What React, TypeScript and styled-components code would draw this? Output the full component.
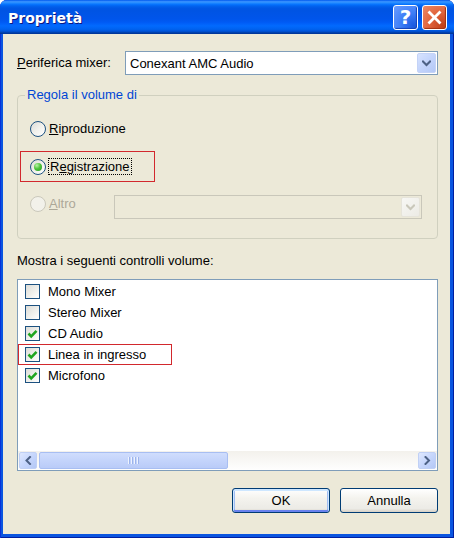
import React from "react";
import styled, { createGlobalStyle, css } from "styled-components";

const GlobalStyle = createGlobalStyle`
  html, body {
    margin: 0;
    padding: 0;
    background: #ffffff;
  }
  body {
    font-family: "Liberation Sans", Arial, sans-serif;
    font-size: 13px;
    color: #000000;
  }
`;

const Window = styled.div`
  width: 454px;
  height: 538px;
  display: flex;
  flex-direction: column;
  background: #0a55e0;
  box-shadow: inset 1px 0 0 #0831d9, inset -1px 0 0 #001ea0, inset 0 -1px 0 #001ea0;
  border-radius: 7px 7px 0 0;
  overflow: hidden;
`;

const TitleBar = styled.div`
  height: 34px;
  flex: none;
  display: flex;
  align-items: center;
  padding: 0 7px 0 8px;
  background: linear-gradient(
    to bottom,
    #0058ee 0%,
    #3a93ff 5%,
    #288eff 8%,
    #127dff 11%,
    #036ffc 14%,
    #0262ee 18%,
    #0057e5 24%,
    #0054e3 30%,
    #0055eb 56%,
    #005bf5 66%,
    #026afe 76%,
    #0062ef 86%,
    #0052d6 92%,
    #0040ab 96%,
    #003092 100%
  );
`;

const Title = styled.div`
  flex: 1;
  color: #ffffff;
  font-family: "DejaVu Sans", "Liberation Sans", sans-serif;
  font-weight: bold;
  font-size: 14px;
  padding-top: 1px;
  text-shadow: 1px 1px 0 #0a1883;
`;

const CaptionButton = styled.div<{ $kind: "help" | "close" }>`
  width: 25px;
  height: 25px;
  box-sizing: border-box;
  border: 1px solid #ffffff;
  border-radius: 3px;
  display: flex;
  align-items: center;
  justify-content: center;
  color: #ffffff;
  font-family: "DejaVu Sans", sans-serif;
  font-weight: bold;
  font-size: 20px;
  ${(p) =>
    p.$kind === "help"
      ? css`
          background: radial-gradient(circle at 85% 85%, #1c5adf 0%, #3d7ef7 45%, #6b9cff 100%);
          box-shadow: inset -1px -1px 1px #1542b5;
        `
      : css`
          margin-left: 4px;
          background: radial-gradient(circle at 85% 85%, #c1411a 0%, #e2643c 50%, #eb8a68 100%);
          box-shadow: inset -1px -1px 1px #a2300f;
        `}
`;

const Client = styled.div`
  flex: 1;
  margin: 0 4px 4px 3px;
  background: #ece9d8;
  padding: 17px 12px 0 14px;
  display: flex;
  flex-direction: column;
`;

const MixerRow = styled.div`
  display: flex;
  align-items: center;
  height: 24px;
`;

const FieldLabel = styled.span<{ $width?: number; $disabled?: boolean }>`
  flex: none;
  width: ${(p) => (p.$width ? `${p.$width}px` : "auto")};
  color: ${(p) => (p.$disabled ? "#aca899" : "#000000")};
  line-height: 16px;
`;

const Combo = styled.div<{ $disabled?: boolean }>`
  flex: 1;
  height: 24px;
  box-sizing: border-box;
  display: flex;
  align-items: center;
  border: 1px solid ${(p) => (p.$disabled ? "#c9c7ba" : "#7f9db9")};
  background: ${(p) => (p.$disabled ? "#ece9d8" : "#ffffff")};
  padding: 1px;
`;

const ComboText = styled.span`
  flex: 1;
  padding-left: 3px;
`;

const DropButton = styled.div<{ $disabled?: boolean }>`
  width: 19px;
  height: 20px;
  box-sizing: border-box;
  border-radius: 2px;
  display: flex;
  align-items: center;
  justify-content: center;
  ${(p) =>
    p.$disabled
      ? css`
          background: linear-gradient(135deg, #f7f7f4, #ecebe5);
          border: 1px solid #e6e4da;
        `
      : css`
          background: linear-gradient(135deg, #d7e3fe 0%, #c3d4fc 50%, #b4c8f6 100%);
          border: 1px solid #c4d3f7;
        `}
`;

const Group = styled.fieldset`
  margin: 12px 0 0 0;
  padding: 16px 15px 19px 2px;
  border: 1px solid #d0d0bf;
  border-radius: 4px;
  min-width: 0;
`;

const Legend = styled.legend`
  color: #0046d5;
  padding: 0 2px;
  margin-left: 5px;
  line-height: 16px;
`;

const RadioRow = styled.div<{ $height: number; $gap?: number; $raise?: boolean }>`
  display: flex;
  align-items: center;
  height: ${(p) => p.$height}px;
  margin-top: ${(p) => p.$gap ?? 0}px;
  padding-left: 10px;
  ${(p) =>
    p.$raise &&
    css`
      & > span {
        margin-bottom: 7px;
      }
    `}
`;

const Marked = styled.div`
  margin-top: 12px;
  width: 135px;
  height: 31px;
  box-sizing: border-box;
  border: 1px solid #d2282d;
  display: flex;
  align-items: center;
  padding-left: 9px;
`;

const RadioCircle = styled.span<{ $disabled?: boolean }>`
  flex: none;
  width: 16px;
  height: 16px;
  box-sizing: border-box;
  border-radius: 50%;
  margin-right: 3px;
  display: flex;
  align-items: center;
  justify-content: center;
  border: 1px solid ${(p) => (p.$disabled ? "#cac8bb" : "#1c5180")};
  background: ${(p) =>
    p.$disabled ? "#f2f1ea" : "linear-gradient(135deg, #dcdcd7 0%, #f2f2ee 55%, #ffffff 100%)"};
`;

const RadioDot = styled.span`
  width: 8px;
  height: 8px;
  border-radius: 50%;
  background: radial-gradient(circle at 35% 30%, #b9f3a7 0%, #4fc43d 45%, #1f9b1f 100%);
`;

const Focused = styled.span`
  outline: 1px dotted #000000;
  outline-offset: 0;
  padding: 0 1px;
  line-height: 15px;
  margin-top: -1px;
`;

const SectionLabel = styled.div`
  margin-top: 14px;
  line-height: 16px;
`;

const ListBox = styled.div`
  margin-top: 10px;
  height: 192px;
  box-sizing: border-box;
  border: 1px solid #7f9db9;
  background: #ffffff;
  display: flex;
  flex-direction: column;
`;

const Items = styled.div`
  flex: 1;
  padding-top: 1px;
`;

const ListItem = styled.div<{ $marked?: boolean }>`
  height: 21px;
  box-sizing: border-box;
  display: flex;
  align-items: center;
  padding-left: 6px;
  border: 1px solid ${(p) => (p.$marked ? "#d2282d" : "transparent")};
  width: ${(p) => (p.$marked ? "154px" : "auto")};
`;

const CheckBox = styled.span`
  flex: none;
  width: 15px;
  height: 15px;
  box-sizing: border-box;
  margin-right: 8px;
  border: 1px solid #1c5180;
  background: linear-gradient(135deg, #dcdcd7 0%, #f0f0ec 55%, #ffffff 100%);
  display: flex;
  align-items: center;
  justify-content: center;
`;

const ScrollBar = styled.div`
  height: 19px;
  flex: none;
  display: flex;
  align-items: center;
  background: linear-gradient(to bottom, #f3f1ec 0%, #fefefe 100%);
`;

const ScrollButton = styled.div`
  width: 18px;
  height: 17px;
  box-sizing: border-box;
  margin: 0 1px;
  border-radius: 2px;
  border: 1px solid #c0d0f5;
  background: linear-gradient(135deg, #dfe8fe 0%, #c6d6fc 50%, #b4c8f6 100%);
  display: flex;
  align-items: center;
  justify-content: center;
`;

const Thumb = styled.div`
  width: 189px;
  height: 17px;
  box-sizing: border-box;
  margin-left: 1px;
  border-radius: 2px;
  border: 1px solid #a8bef2;
  background: linear-gradient(to bottom, #d0ddfd 0%, #c4d4fb 50%, #b9cbf8 100%);
  display: flex;
  align-items: center;
  justify-content: center;
  gap: 1px;
`;

const Grip = styled.span`
  width: 1px;
  height: 7px;
  background: #eef3fe;
  box-shadow: 1px 0 0 #9cb4ec;
  margin-right: 1px;
`;

const Track = styled.div`
  flex: 1;
`;

const ButtonRow = styled.div`
  margin-top: 17px;
  display: flex;
  justify-content: flex-end;
  gap: 10px;
`;

const PushButton = styled.button<{ $default?: boolean }>`
  width: 98px;
  height: 25px;
  box-sizing: border-box;
  font-family: "Liberation Sans", Arial, sans-serif;
  font-size: 13px;
  color: #000000;
  border: 1px solid #003c74;
  border-radius: 3px;
  background: linear-gradient(to bottom, #ffffff 0%, #f4f3ee 40%, #ecebe6 85%, #d6d0c5 100%);
  padding: 0;
  ${(p) =>
    p.$default &&
    css`
      box-shadow: inset 0 1px 0 1px #cee7ff, inset 0 -1px 0 1px #6982ee, inset 0 0 0 2px #a0bdf3;
    `}
`;

const Chevron = ({ dir, color }: { dir: "down" | "left" | "right"; color: string }) => {
  const d =
    dir === "down" ? "M1 1.5 L4.5 5 L8 1.5" : dir === "left" ? "M5 1 L1.5 4.5 L5 8" : "M1.5 1 L5 4.5 L1.5 8";
  const w = dir === "down" ? 9 : 7;
  const h = dir === "down" ? 7 : 9;
  return (
    <svg width={w} height={h} viewBox={`0 0 ${w} ${h}`}>
      <path d={d} fill="none" stroke={color} strokeWidth={2} strokeLinecap="square" />
    </svg>
  );
};

const Check = () => (
  <svg width="11" height="10" viewBox="0 0 11 10">
    <path d="M1.5 4.5 L4.2 7.3 L9.5 1.8" fill="none" stroke="#1fa51f" strokeWidth={2.6} />
  </svg>
);

const CloseGlyph = () => (
  <svg width="15" height="15" viewBox="0 0 15 15">
    <path d="M2.5 2.5 L12.5 12.5 M12.5 2.5 L2.5 12.5" stroke="#ffffff" strokeWidth={2.8} strokeLinecap="square" />
  </svg>
);

const controls = [
  { name: "Mono Mixer", on: false },
  { name: "Stereo Mixer", on: false },
  { name: "CD Audio", on: true },
  { name: "Linea in ingresso", on: true, marked: true },
  { name: "Microfono", on: true },
];

export default function App() {
  return (
    <>
      <GlobalStyle />
      <Window>
        <TitleBar>
          <Title>Proprietà</Title>
          <CaptionButton $kind="help">?</CaptionButton>
          <CaptionButton $kind="close">
            <CloseGlyph />
          </CaptionButton>
        </TitleBar>
        <Client>
          <MixerRow>
            <FieldLabel $width={108}>
              <u>P</u>eriferica mixer:
            </FieldLabel>
            <Combo>
              <ComboText>Conexant AMC Audio</ComboText>
              <DropButton>
                <Chevron dir="down" color="#4d6185" />
              </DropButton>
            </Combo>
          </MixerRow>

          <Group>
            <Legend>Regola il volume di</Legend>
            <RadioRow $height={20}>
              <RadioCircle />
              <FieldLabel>
                <u>R</u>iproduzione
              </FieldLabel>
            </RadioRow>
            <Marked>
              <RadioCircle>
                <RadioDot />
              </RadioCircle>
              <Focused>
                R<u>e</u>gistrazione
              </Focused>
            </Marked>
            <RadioRow $height={24} $gap={13} $raise>
              <RadioCircle $disabled />
              <FieldLabel $width={65} $disabled>
                <u>A</u>ltro
              </FieldLabel>
              <Combo $disabled>
                <ComboText />
                <DropButton $disabled>
                  <Chevron dir="down" color="#c9c7ba" />
                </DropButton>
              </Combo>
            </RadioRow>
          </Group>

          <SectionLabel>Mostra i seguenti controlli volume:</SectionLabel>
          <ListBox>
            <Items>
              {controls.map((c) => (
                <ListItem key={c.name} $marked={c.marked}>
                  <CheckBox>{c.on && <Check />}</CheckBox>
                  <span>{c.name}</span>
                </ListItem>
              ))}
            </Items>
            <ScrollBar>
              <ScrollButton>
                <Chevron dir="left" color="#4d6185" />
              </ScrollButton>
              <Thumb>
                <Grip />
                <Grip />
                <Grip />
                <Grip />
              </Thumb>
              <Track />
              <ScrollButton>
                <Chevron dir="right" color="#4d6185" />
              </ScrollButton>
            </ScrollBar>
          </ListBox>

          <ButtonRow>
            <PushButton $default>OK</PushButton>
            <PushButton>Annulla</PushButton>
          </ButtonRow>
        </Client>
      </Window>
    </>
  );
}
